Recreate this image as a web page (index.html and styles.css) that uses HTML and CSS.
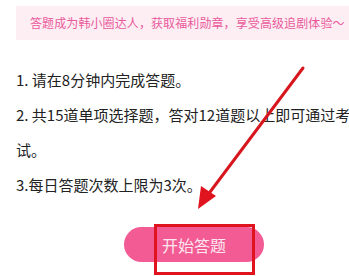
FILE: index.html
```html
<!DOCTYPE html>
<html lang="zh">
<head>
  <meta charset="UTF-8">
  <title>答题</title>
  <link rel="stylesheet" href="styles.css">
</head>
<body>

<div id="page">
  <div id="notice">答题成为韩小圈达人，获取福利勋章，享受高级追剧体验～</div>

  <div id="rules">
    <p>1. 请在8分钟内完成答题。</p>
    <p>2. 共15道单项选择题，答对12道题以上即可通过考试。</p>
    <p>3.每日答题次数上限为3次。</p>
  </div>

  <div id="startWrap">
    <button id="startBtn">开始答题</button>
    <div id="mark"></div>
  </div>

  <svg id="arrow" width="349" height="276" viewBox="0 0 349 276">
    <line x1="303" y1="68" x2="210" y2="192" stroke="#d8161e" stroke-width="3" stroke-linecap="round"/>
    <polygon points="198,209 201,186 216,196" fill="#e0141e"/>
  </svg>
</div>

</body>
</html>
```

FILE: styles.css
```css
body, html {
  margin: 0;
  overflow: hidden;
  background: #fff;
  font-family: "Noto Sans CJK SC", "Noto Sans", sans-serif;
}
#page {
  position: relative;
  width: 349px;
  height: 276px;
  padding: 6px 0 0 16px;
  box-sizing: border-box;
  overflow: hidden;
}
#notice {
  background: #fdeef4;
  color: #ea5a9b;
  font-size: 12px;
  letter-spacing: 0.1px;
  height: 34px;
  line-height: 34px;
  padding-left: 14px;
  margin-right: -20px;
  white-space: nowrap;
}
#rules {
  margin-top: 22px;
  margin-right: -8px;
  color: #222;
  font-size: 15px;
  line-height: 35px;
}
#rules p {
  margin: 0;
}
#startWrap {
  position: relative;
  width: 140px;
  margin: 25px 0 0 108px;
}
#startBtn {
  display: block;
  width: 140px;
  height: 35px;
  border: none;
  border-radius: 18px;
  background: #f25b93;
  color: #fde6ef;
  font-family: "Noto Sans CJK SC", sans-serif;
  font-size: 16px;
  padding: 0;
}
#mark {
  position: absolute;
  left: 30px;
  top: -3px;
  width: 95px;
  height: 45px;
  border: 3px solid #e0141e;
}
#arrow {
  position: absolute;
  left: 0;
  top: 0;
}
```
